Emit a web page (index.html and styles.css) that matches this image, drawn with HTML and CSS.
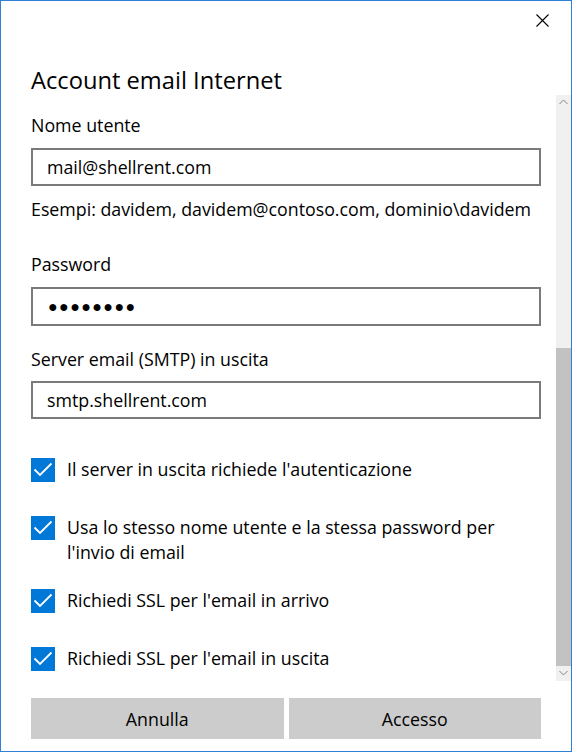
FILE: index.html
```html
<!DOCTYPE html>
<html lang="it">
<head>
<meta charset="utf-8">
<title>Account email Internet</title>
<link rel="stylesheet" href="styles.css">
</head>
<body>
<div class="window">
  <div class="titlebar">
    <button class="close" aria-label="Chiudi">
      <svg width="13" height="13" viewBox="0 0 13 13"><path d="M0.5 0.5 L12.5 12.5 M12.5 0.5 L0.5 12.5" stroke="#000" stroke-width="1.1" fill="none"/></svg>
    </button>
  </div>
  <h1 class="title">Account email Internet</h1>
  <div class="body">
    <div class="form">
      <label class="label" for="user">Nome utente</label>
      <input class="field field-first" id="user" type="text" value="mail@shellrent.com" readonly>
      <p class="hint">Esempi: davidem, davidem@contoso.com, dominio\davidem</p>
      <label class="label label-password">Password</label>
      <div class="field field-password" role="textbox" aria-label="Password">●●●●●●●●</div>
      <label class="label label-server" for="smtp">Server email (SMTP) in uscita</label>
      <input class="field field-server" id="smtp" type="text" value="smtp.shellrent.com" readonly>
      <div class="checks">
        <div class="check">
          <span class="box"><svg width="24" height="24" viewBox="0 0 24 24"><path d="M3.5 11.5 L9 17 L20.5 5.5" stroke="#fff" stroke-width="1.8" fill="none"/></svg></span>
          <span class="check-text">Il server in uscita richiede l'autenticazione</span>
        </div>
        <div class="check">
          <span class="box"><svg width="24" height="24" viewBox="0 0 24 24"><path d="M3.5 11.5 L9 17 L20.5 5.5" stroke="#fff" stroke-width="1.8" fill="none"/></svg></span>
          <span class="check-text">Usa lo stesso nome utente e la stessa password per l'invio di email</span>
        </div>
        <div class="check">
          <span class="box"><svg width="24" height="24" viewBox="0 0 24 24"><path d="M3.5 11.5 L9 17 L20.5 5.5" stroke="#fff" stroke-width="1.8" fill="none"/></svg></span>
          <span class="check-text">Richiedi SSL per l'email in arrivo</span>
        </div>
        <div class="check">
          <span class="box"><svg width="24" height="24" viewBox="0 0 24 24"><path d="M3.5 11.5 L9 17 L20.5 5.5" stroke="#fff" stroke-width="1.8" fill="none"/></svg></span>
          <span class="check-text">Richiedi SSL per l'email in uscita</span>
        </div>
      </div>
    </div>
    <div class="scrollbar">
      <div class="sb-btn"><svg width="15" height="15" viewBox="0 0 15 15"><polyline points="3.5,9 7.5,5 11.5,9" stroke="#858585" stroke-width="1" fill="none"/></svg></div>
      <div class="sb-track"></div>
      <div class="sb-thumb"></div>
      <div class="sb-btn"><svg width="15" height="15" viewBox="0 0 15 15"><polyline points="3.5,5 7.5,9 11.5,5" stroke="#858585" stroke-width="1" fill="none"/></svg></div>
    </div>
  </div>
  <div class="footer">
    <button class="btn">Annulla</button>
    <button class="btn">Accesso</button>
  </div>
</div>
</body>
</html>
```

FILE: styles.css
```css
* {
  box-sizing: border-box;
}

html,
body {
  margin: 0;
  padding: 0;
  background: #fff;
}

body {
  font-family: "Open Sans", "Noto Sans", sans-serif;
  color: #000;
}

.window {
  width: 572px;
  height: 752px;
  border: 1px solid #2f80d5;
  background: #fff;
  display: flex;
  flex-direction: column;
  overflow: hidden;
}

.titlebar {
  height: 39px;
  display: flex;
  justify-content: flex-end;
  align-items: center;
  padding-right: 22px;
  flex: none;
}

.close {
  width: 13px;
  height: 13px;
  padding: 0;
  border: 0;
  background: none;
  display: block;
}

.close svg {
  display: block;
}

.title {
  margin: 25px 0 0 30px;
  height: 30px;
  font-size: 23.7px;
  line-height: 30px;
  font-weight: 400;
  flex: none;
}

.body {
  display: flex;
  height: 586px;
  padding-left: 30px;
  flex: none;
}

.form {
  width: 510px;
  padding-top: 18px;
  display: flex;
  flex-direction: column;
  overflow: hidden;
  flex: none;
}

.label {
  display: block;
  font-size: 17.8px;
  line-height: 25px;
}

.label-password {
  margin-top: 30px;
}

.label-server {
  margin-top: 21px;
}

.field {
  display: block;
  width: 510px;
  height: 39px;
  margin: 10px 0 0;
  padding: 0 14px;
  border: 2px solid #7a7a7a;
  border-radius: 0;
  background: #fff;
  font-family: "Open Sans", "Noto Sans", sans-serif;
  font-size: 17.8px;
  line-height: 35px;
  color: #000;
  outline: none;
}

.field-server {
  margin-top: 9px;
}

.field-password {
  font-family: "Liberation Sans", sans-serif;
  font-size: 16px;
  letter-spacing: 1.4px;
  line-height: 35px;
  padding-left: 15px;
}

.hint {
  margin: 11px 0 0;
  font-size: 17.8px;
  line-height: 25px;
}

.checks {
  margin-top: 38px;
  display: flex;
  flex-direction: column;
  gap: 23px;
}

.check {
  display: flex;
  align-items: flex-start;
  min-height: 35px;
}

.box {
  flex: none;
  width: 24px;
  height: 24px;
  margin-top: 1px;
  margin-right: 12px;
  background: #0078d7;
}

.box svg {
  display: block;
}

.check-text {
  font-size: 17.8px;
  line-height: 25px;
}

.scrollbar {
  width: 15px;
  margin-left: 15px;
  display: flex;
  flex-direction: column;
  background: #f0f0f0;
  flex: none;
}

.sb-btn {
  height: 15px;
  flex: none;
}

.sb-btn svg {
  display: block;
}

.sb-track {
  height: 238px;
  flex: none;
}

.sb-thumb {
  height: 318px;
  background: #c2c2c2;
  flex: none;
}

.footer {
  margin-top: 17px;
  padding-left: 30px;
  display: grid;
  grid-template-columns: 1fr 1fr;
  gap: 5px;
  width: 540px;
  flex: none;
}

.btn {
  height: 41px;
  border: 0;
  padding: 0;
  background: #cccccc;
  font-family: "Open Sans", "Noto Sans", sans-serif;
  font-size: 17.8px;
  color: #000;
}
```
